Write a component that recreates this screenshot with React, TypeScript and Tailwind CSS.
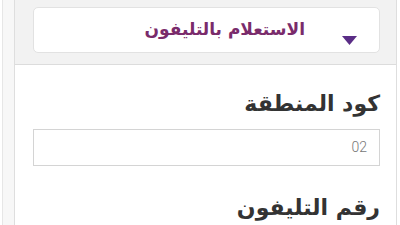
export default function App() {
  return (
    <div className="w-[400px] h-[225px] overflow-hidden bg-white flex" style={{ fontFamily: '"DejaVu Sans", "Noto Sans", sans-serif' }}>
      {/* side strip */}
      <div className="w-[3px] bg-white border-r border-[#e6e6e6]" />
      <div className="w-[11px] bg-[#f7f7f7]" />

      <div dir="rtl" className="w-[383px] border-l border-r border-[#dedede] bg-white flex flex-col">
        {/* selector */}
        <div className="h-[65px] bg-[#f2f2f2] border-b border-[#dcdcdc] pr-[16px] pl-[18px] pt-[7px]">
          <div className="h-[46px] bg-white border border-[#e2e2e2] rounded-[5px] flex items-center pr-[74px] relative">
            <span className="text-[17px] font-bold text-[#7a2b6b] leading-none pb-[2px]">الاستعلام بالتليفون</span>
            <svg className="absolute right-[22px] top-[28px]" width="15" height="9" viewBox="0 0 15 9">
              <polygon points="0,0 15,0 7.5,9" fill="#5a2d86" />
            </svg>
          </div>
        </div>

        {/* fields */}
        <div className="pr-[16px] pl-[18px] pt-[28px]">
          <div className="text-[22px] font-bold text-[#333] leading-none">كود المنطقة</div>
          <div className="mt-[14px] h-[37px] border border-[#d4d4d4] flex items-center pr-[12px]">
            <span dir="ltr" className="text-[14px] text-[#777]" style={{ fontFamily: 'Roboto, sans-serif', fontWeight: 300 }}>02</span>
          </div>
          <div className="mt-[31px] text-[22px] font-bold text-[#333] leading-none">رقم التليفون</div>
        </div>
      </div>
    </div>
  )
}
